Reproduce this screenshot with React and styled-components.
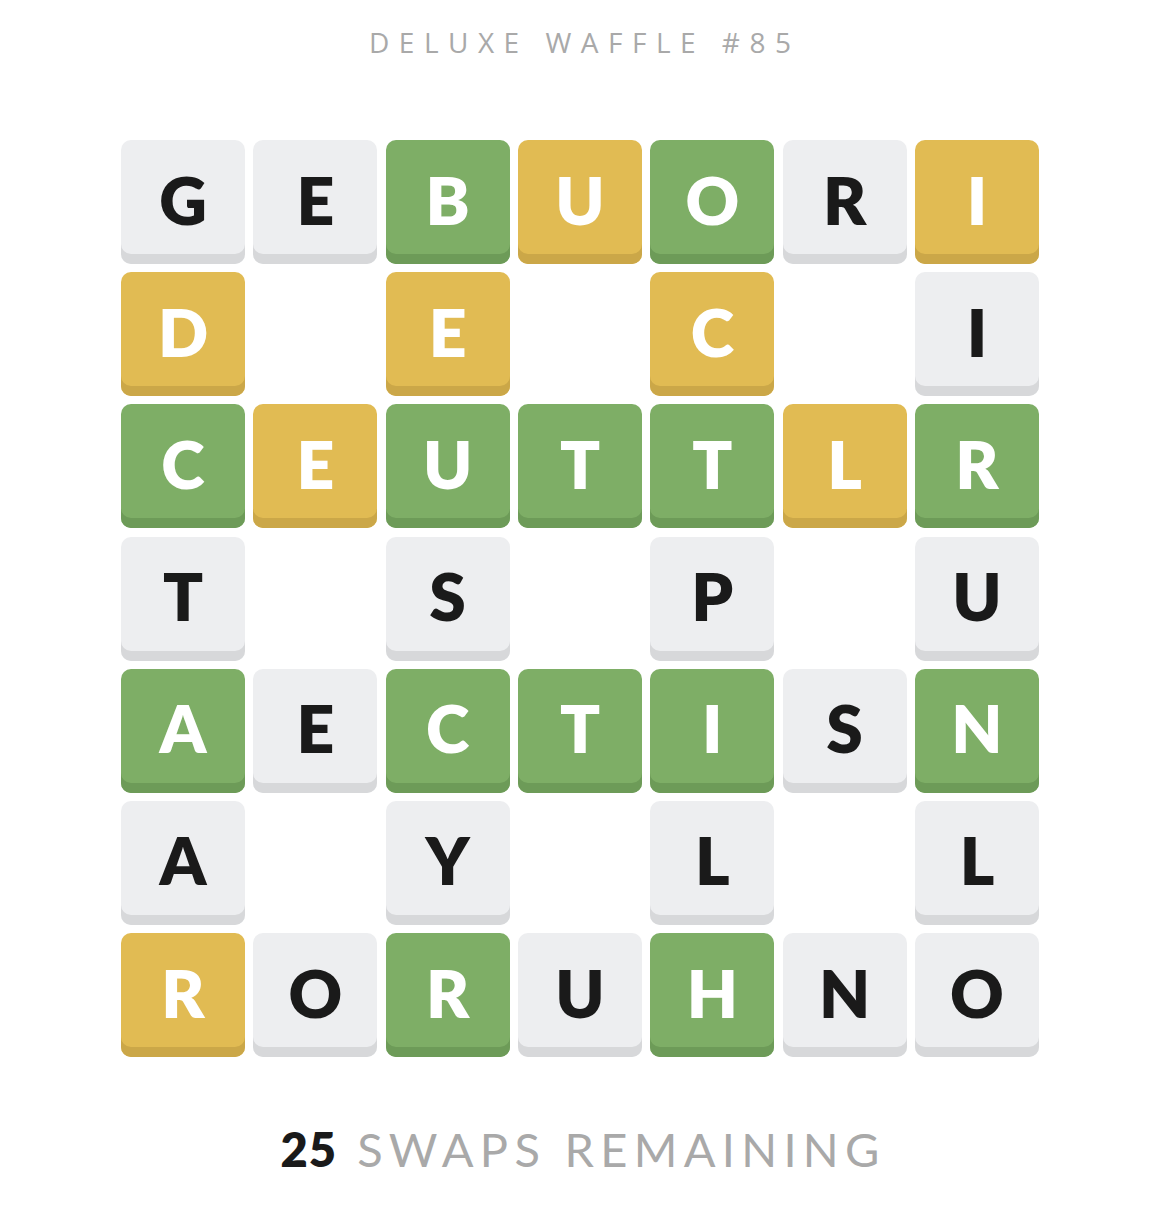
import React from 'react';
import styled, { createGlobalStyle } from 'styled-components';

const GlobalStyle = createGlobalStyle`
body {
    margin: 0;
    background: #fff;
    font-family: "Lato", "Open Sans", sans-serif;
}
`;

const Page = styled.div`
width: 1160px;
display: flex;
flex-direction: column;
align-items: center;
`;

const Title = styled.h1`
margin: 26px 0 0 0;
font-family: "Open Sans", "Lato", sans-serif;
font-size: 28px;
font-weight: 400;
letter-spacing: 9.5px;
padding-left: 9.5px;
color: #a9a9a9;
line-height: 32px;
`;

const Board = styled.div`
margin-top: 82px;
width: 918px;
display: grid;
grid-template-columns: repeat(7, 1fr);
grid-auto-rows: 124px;
column-gap: 8.33px;
row-gap: 8.2px;
`;

const palette = {
    grey: { face: '#edeef0', edge: '#d7d8da', text: '#1a1a1a' },
    green: { face: '#7eae66', edge: '#6d9b58', text: '#fff' },
    yellow: { face: '#e1bb53', edge: '#cba748', text: '#fff' },
};

const Tile = styled.div`
box-sizing: border-box;
border-radius: 10px;
background: ${props => palette[props.tone].face};
box-shadow: inset 0 -10px 0 ${props => palette[props.tone].edge};
color: ${props => palette[props.tone].text};
display: flex;
align-items: center;
justify-content: center;
padding-bottom: 6px;
font-size: 66px;
font-weight: 800;
`;

const Hole = styled.div``;

const Footer = styled.div`
margin-top: 64px;
font-size: 47px;
letter-spacing: 6.3px;
padding-left: 6.3px;
color: #a9a9a9;
line-height: 56px;
`;

const Count = styled.span`
color: #1a1a1a;
font-weight: 800;
letter-spacing: 1px;
margin-right: 20px;
`;

// g = grey, n = green, y = yellow, . = empty
const rows = [
    ['GEBUORI', 'ggnyngy'],
    ['D.E.C.I', 'y.y.y.g'],
    ['CEUTTLR', 'nynnnyn'],
    ['T.S.P.U', 'g.g.g.g'],
    ['AECTISN', 'ngnnngn'],
    ['A.Y.L.L', 'g.g.g.g'],
    ['RORUHNO', 'ygngngg'],
];

const tones = { g: 'grey', n: 'green', y: 'yellow' };

function App() {
    return (
        <Page>
            <GlobalStyle />
            <Title>DELUXE WAFFLE #85</Title>
            <Board>
                {rows.map(([letters, colors], r) =>
                    letters.split('').map((ch, c) =>
                        ch === '.'
                            ? <Hole key={`${r}-${c}`} />
                            : <Tile key={`${r}-${c}`} tone={tones[colors[c]]}>{ch}</Tile>
                    )
                )}
            </Board>
            <Footer><Count>25</Count>SWAPS REMAINING</Footer>
        </Page>
    );
}

export default App;
